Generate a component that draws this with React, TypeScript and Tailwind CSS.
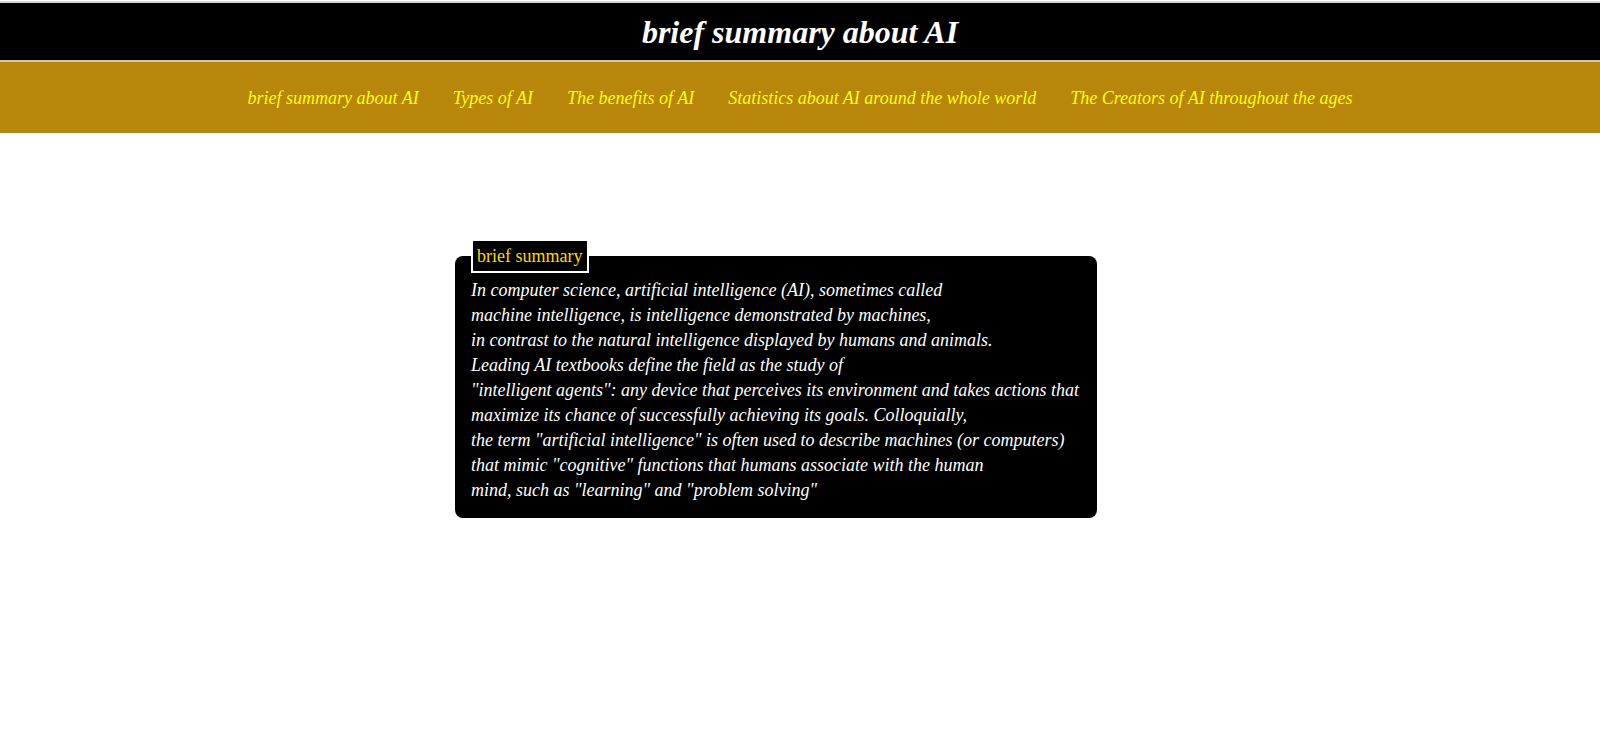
import React from "react";

const links = [
  "brief summary about AI",
  "Types of AI",
  "The benefits of AI",
  "Statistics about AI around the whole world",
  "The Creators of AI throughout the ages",
];

const lines = [
  "In computer science, artificial intelligence (AI), sometimes called",
  "machine intelligence, is intelligence demonstrated by machines,",
  "in contrast to the natural intelligence displayed by humans and animals.",
  "Leading AI textbooks define the field as the study of",
  "\"intelligent agents\": any device that perceives its environment and takes actions that",
  "maximize its chance of successfully achieving its goals. Colloquially,",
  "the term \"artificial intelligence\" is often used to describe machines (or computers)",
  "that mimic \"cognitive\" functions that humans associate with the human",
  "mind, such as \"learning\" and \"problem solving\"",
];

export default function App() {
  return (
    <div className="min-h-screen bg-white font-['Liberation_Serif','Times_New_Roman',serif]">
      <div className="h-[1px] bg-white" />
      <div className="h-[2px] bg-[#d4d4d4]" />
      <header className="h-[57px] bg-black flex items-center justify-center">
        <h1 className="text-[32px] font-bold italic text-white leading-none">
          brief summary about AI
        </h1>
      </header>
      <div className="h-[2px] bg-[#c8c8c8]" />
      <nav className="h-[71px] bg-[#b8860b] flex items-center justify-center gap-[34px]">
        {links.map((l) => (
          <a key={l} className="text-[18px] italic text-[#ffff00] leading-none">
            {l}
          </a>
        ))}
      </nav>
      <div className="pt-[106px] pl-[455px]">
        <fieldset className="w-[642px] bg-black rounded-lg px-4 pb-[15px]">
          <legend className="border-2 border-white bg-black pl-[4px] pr-[5px] py-[4px] text-[18px] leading-[22px] text-[#ffd700]">
            brief summary
          </legend>
          <div className="pt-[5px] text-[18px] leading-[25px] italic text-white">
            {lines.map((t, i) => (
              <div key={i}>{t}</div>
            ))}
          </div>
        </fieldset>
      </div>
    </div>
  );
}
